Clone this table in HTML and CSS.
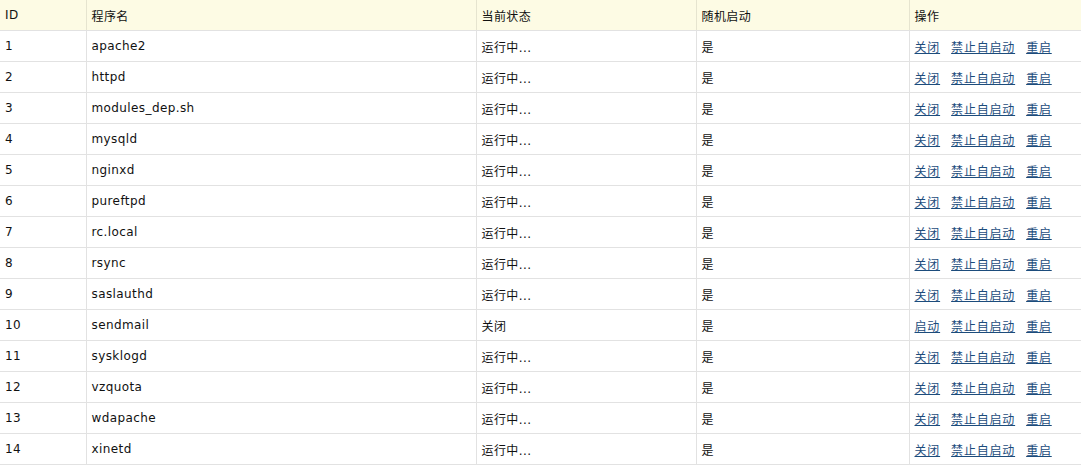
FILE: index.html
```html
<!DOCTYPE html>
<html>
<head>
<meta charset="utf-8">
<link rel="stylesheet" href="styles.css">
</head>
<body>
<table class="grid">
  <colgroup>
    <col class="c-id"><col class="c-name"><col class="c-state"><col class="c-auto"><col class="c-op">
  </colgroup>
  <thead>
    <tr><th>ID</th><th>程序名</th><th>当前状态</th><th>随机启动</th><th>操作</th></tr>
  </thead>
  <tbody>
    <tr><td>1</td><td class="mono">apache2</td><td>运行中...</td><td>是</td><td><a href="#">关闭</a><a href="#">禁止自启动</a><a href="#">重启</a></td></tr>
    <tr><td>2</td><td class="mono">httpd</td><td>运行中...</td><td>是</td><td><a href="#">关闭</a><a href="#">禁止自启动</a><a href="#">重启</a></td></tr>
    <tr><td>3</td><td class="mono">modules_dep.sh</td><td>运行中...</td><td>是</td><td><a href="#">关闭</a><a href="#">禁止自启动</a><a href="#">重启</a></td></tr>
    <tr><td>4</td><td class="mono">mysqld</td><td>运行中...</td><td>是</td><td><a href="#">关闭</a><a href="#">禁止自启动</a><a href="#">重启</a></td></tr>
    <tr><td>5</td><td class="mono">nginxd</td><td>运行中...</td><td>是</td><td><a href="#">关闭</a><a href="#">禁止自启动</a><a href="#">重启</a></td></tr>
    <tr><td>6</td><td class="mono">pureftpd</td><td>运行中...</td><td>是</td><td><a href="#">关闭</a><a href="#">禁止自启动</a><a href="#">重启</a></td></tr>
    <tr><td>7</td><td class="mono">rc.local</td><td>运行中...</td><td>是</td><td><a href="#">关闭</a><a href="#">禁止自启动</a><a href="#">重启</a></td></tr>
    <tr><td>8</td><td class="mono">rsync</td><td>运行中...</td><td>是</td><td><a href="#">关闭</a><a href="#">禁止自启动</a><a href="#">重启</a></td></tr>
    <tr><td>9</td><td class="mono">saslauthd</td><td>运行中...</td><td>是</td><td><a href="#">关闭</a><a href="#">禁止自启动</a><a href="#">重启</a></td></tr>
    <tr><td>10</td><td class="mono">sendmail</td><td>关闭</td><td>是</td><td><a href="#">启动</a><a href="#">禁止自启动</a><a href="#">重启</a></td></tr>
    <tr><td>11</td><td class="mono">sysklogd</td><td>运行中...</td><td>是</td><td><a href="#">关闭</a><a href="#">禁止自启动</a><a href="#">重启</a></td></tr>
    <tr><td>12</td><td class="mono">vzquota</td><td>运行中...</td><td>是</td><td><a href="#">关闭</a><a href="#">禁止自启动</a><a href="#">重启</a></td></tr>
    <tr><td>13</td><td class="mono">wdapache</td><td>运行中...</td><td>是</td><td><a href="#">关闭</a><a href="#">禁止自启动</a><a href="#">重启</a></td></tr>
    <tr><td>14</td><td class="mono">xinetd</td><td>运行中...</td><td>是</td><td><a href="#">关闭</a><a href="#">禁止自启动</a><a href="#">重启</a></td></tr>
  </tbody>
</table>
</body>
</html>
```

FILE: styles.css
```css
html, body {
  margin: 0;
  padding: 0;
  background: #ffffff;
}
body {
  font-family: "DejaVu Sans", "Noto Sans CJK SC", sans-serif;
  font-size: 12px;
  color: #111111;
}
.grid {
  width: 1081px;
  border-collapse: collapse;
  table-layout: fixed;
}
.c-id { width: 86px; }
.c-name { width: 390px; }
.c-state { width: 220px; }
.c-auto { width: 213px; }
.c-op { width: 172px; }
.grid th {
  background: #fdfbe4;
  font-weight: normal;
  text-align: left;
  height: 30px;
  padding: 0 0 0 5px;
  border-bottom: 1px solid #e2e2e2;
  border-left: 1px solid #e6e4cf;
  vertical-align: middle;
  letter-spacing: 0.4px;
}
.grid td {
  height: 30px;
  padding: 0 0 0 5px;
  border-bottom: 1px solid #e2e2e2;
  border-left: 1px solid #e2e2e2;
  vertical-align: middle;
  white-space: nowrap;
  letter-spacing: 0.4px;
}
.grid th:first-child, .grid td:first-child {
  border-left: none;
}
.grid a {
  color: #1c4c7c;
  text-decoration: underline;
  margin-right: 11px;
  letter-spacing: 0.8px;
}
.grid a:last-child {
  margin-right: 0;
}
```
